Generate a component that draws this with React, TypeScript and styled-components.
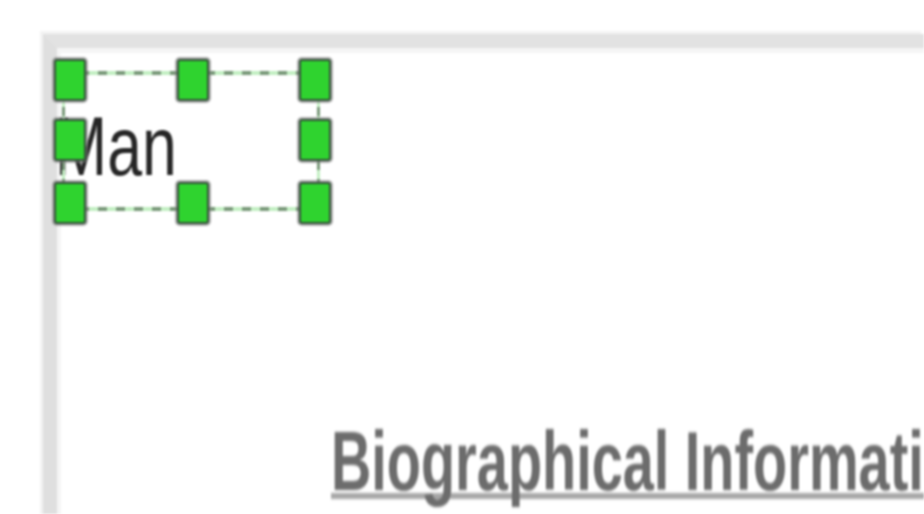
import React from "react";
import styled, { createGlobalStyle } from "styled-components";

const Global = createGlobalStyle`
  html, body {
    margin: 0;
    padding: 0;
    background: #ffffff;
    overflow: hidden;
  }
  * { box-sizing: border-box; }
`;

const Page = styled.div`
  width: 924px;
  height: 514px;
  overflow: hidden;
  background: #ffffff;
  padding: 34px 0 0 43px;
  filter: blur(0.9px);
`;

const Panel = styled.div`
  height: 520px;
  border-top: 14px solid #e2e2e2;
  border-left: 14px solid #dfdfdf;
  box-shadow: -3px -3px 0 #f3f3f3, inset 4px 5px 0 #f5f5f5;
  background: #ffffff;
`;

const Canvas = styled.div`
  position: relative;
  height: 371px;
`;

const TextItem = styled.div`
  position: absolute;
  left: -2px;
  top: 56px;
  font-family: "Liberation Sans", Arial, sans-serif;
  font-size: 84px;
  line-height: 84px;
  color: #262626;
  white-space: nowrap;
  transform: scaleX(0.745);
  transform-origin: left top;
`;

const dash = (dir: string) =>
  `repeating-linear-gradient(${dir}, #789878 0 9px, #c2efc2 9px 18px)`;

const SelectionBox = styled.div`
  position: absolute;
  left: 5px;
  top: 23px;
  width: 258px;
  height: 140px;
  background:
    ${dash("90deg")} left top / 100% 4px no-repeat,
    ${dash("90deg")} left bottom / 100% 4px no-repeat,
    ${dash("180deg")} left top / 3px 100% no-repeat,
    ${dash("180deg")} right top / 3px 100% no-repeat;
`;

const Handle = styled.div<{ $x: number; $y: number }>`
  position: absolute;
  left: ${(p) => p.$x}px;
  top: ${(p) => p.$y}px;
  width: 32px;
  height: 42px;
  background: #2fd32f;
  border: 2px solid #35533a;
  border-radius: 3px;
  box-shadow: 0 0 0 2px rgba(120, 120, 120, 0.6);
`;

const Heading = styled.div`
  margin-left: 274px;
  font-family: "Liberation Sans", Arial, sans-serif;
  font-weight: bold;
  font-size: 84px;
  line-height: 84px;
  color: #6c6c6c;
  white-space: nowrap;
  transform: scaleX(0.665);
  transform-origin: left top;
  filter: blur(0.8px);
  text-decoration: underline;
  text-decoration-color: #a6a6a6;
  text-decoration-thickness: 6px;
  text-underline-offset: 3px;
  text-decoration-skip-ink: none;
`;

const handles: Array<[number, number]> = [
  [-8, -12],
  [115, -12],
  [237, -12],
  [-8, 48],
  [237, 48],
  [-8, 111],
  [115, 111],
  [237, 111],
];

export default function App() {
  return (
    <>
      <Global />
      <Page>
        <Panel>
          <Canvas>
            <TextItem>Man</TextItem>
            <SelectionBox>
              {handles.map(([x, y], i) => (
                <Handle key={i} $x={x} $y={y} />
              ))}
            </SelectionBox>
          </Canvas>
          <Heading>Biographical Information</Heading>
        </Panel>
      </Page>
    </>
  );
}
